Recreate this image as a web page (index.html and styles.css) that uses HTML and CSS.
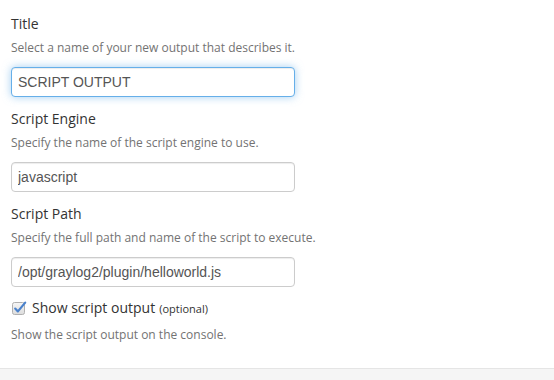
FILE: index.html
```html
<!DOCTYPE html>
<html lang="en">
<head>
    <meta charset="UTF-8">
    <meta name="viewport" content="width=device-width, initial-scale=1.0">
    <title>Script output</title>
    <link rel="stylesheet" href="styles.css">
</head>
<body>

<form class="output-form">
    <!-- Title -->
    <div class="form-group">
        <label class="control-label" for="title">Title</label>
        <p class="help-block">Select a name of your new output that describes it.</p>
        <input class="form-control focused" id="title" type="text" value="SCRIPT OUTPUT">
    </div>

    <!-- Script engine -->
    <div class="form-group">
        <label class="control-label" for="engine">Script Engine</label>
        <p class="help-block">Specify the name of the script engine to use.</p>
        <input class="form-control" id="engine" type="text" value="javascript">
    </div>

    <!-- Script path -->
    <div class="form-group">
        <label class="control-label" for="path">Script Path</label>
        <p class="help-block">Specify the full path and name of the script to execute.</p>
        <input class="form-control" id="path" type="text" value="/opt/graylog2/plugin/helloworld.js">
    </div>

    <!-- Show output -->
    <div class="form-group checkbox-group">
        <label class="checkbox-label">
            <span class="checkbox-box">
                <svg width="15" height="15" viewBox="0 0 15 15">
                    <defs>
                        <linearGradient id="boxFill" x1="0" y1="0" x2="0" y2="1">
                            <stop offset="0" stop-color="#f6f6f6"/>
                            <stop offset="1" stop-color="#dcdcdc"/>
                        </linearGradient>
                    </defs>
                    <rect x="0.5" y="2.5" width="12" height="12" rx="2" fill="url(#boxFill)" stroke="#b0b0b0"/>
                    <path d="M3.2 8.6 L5.9 11.4 L13.2 2.6" fill="none" stroke="#4a82cc" stroke-width="2.2" stroke-linecap="round" stroke-linejoin="round"/>
                </svg>
            </span>
            Show script output <small class="optional">(optional)</small>
        </label>
        <p class="help-block">Show the script output on the console.</p>
    </div>
</form>

<div class="modal-footer"></div>

</body>
</html>
```

FILE: styles.css
```css
/* Basic reset */
* {
    margin: 0;
    padding: 0;
    box-sizing: border-box;
}
body {
    font-family: "Open Sans", Arial, sans-serif;
    font-size: 14px;
    color: #333;
    background-color: #fff;
    height: 380px;
    overflow: hidden;
}

/* Form */
.output-form {
    padding: 14px 0 0 11px;
    height: 369px;
    border-bottom: 1px solid #e5e5e5;
}
.form-group {
    width: 284px;
    margin-bottom: 12px;
}
.control-label {
    display: block;
    line-height: 20px;
    margin-bottom: 5px;
}
.help-block {
    font-size: 12px;
    line-height: 17px;
    color: #737373;
    margin-bottom: 11px;
    white-space: nowrap;
}

/* Inputs */
.form-control {
    display: block;
    width: 100%;
    height: 30px;
    padding: 4px 6px;
    font-family: "Liberation Sans", Arial, sans-serif;
    font-size: 14px;
    color: #555;
    background-color: #fff;
    border: 1px solid #ccc;
    border-radius: 4px;
    box-shadow: inset 0 1px 1px rgba(0, 0, 0, 0.075);
    outline: none;
}
.form-control.focused {
    border-color: #66afe9;
    box-shadow: inset 0 1px 1px rgba(0, 0, 0, 0.075), 0 0 8px rgba(102, 175, 233, 0.6);
}

/* Checkbox */
.checkbox-label {
    display: flex;
    align-items: center;
    line-height: 18px;
    margin-bottom: 9px;
}
.checkbox-box {
    display: flex;
    width: 15px;
    height: 15px;
    margin: -2px 5px 0 1px;
}
.optional {
    font-size: 11px;
    margin-left: 4px;
    position: relative;
    top: 1px;
}

/* Footer strip */
.modal-footer {
    height: 11px;
    background-color: #f5f5f5;
}
```
